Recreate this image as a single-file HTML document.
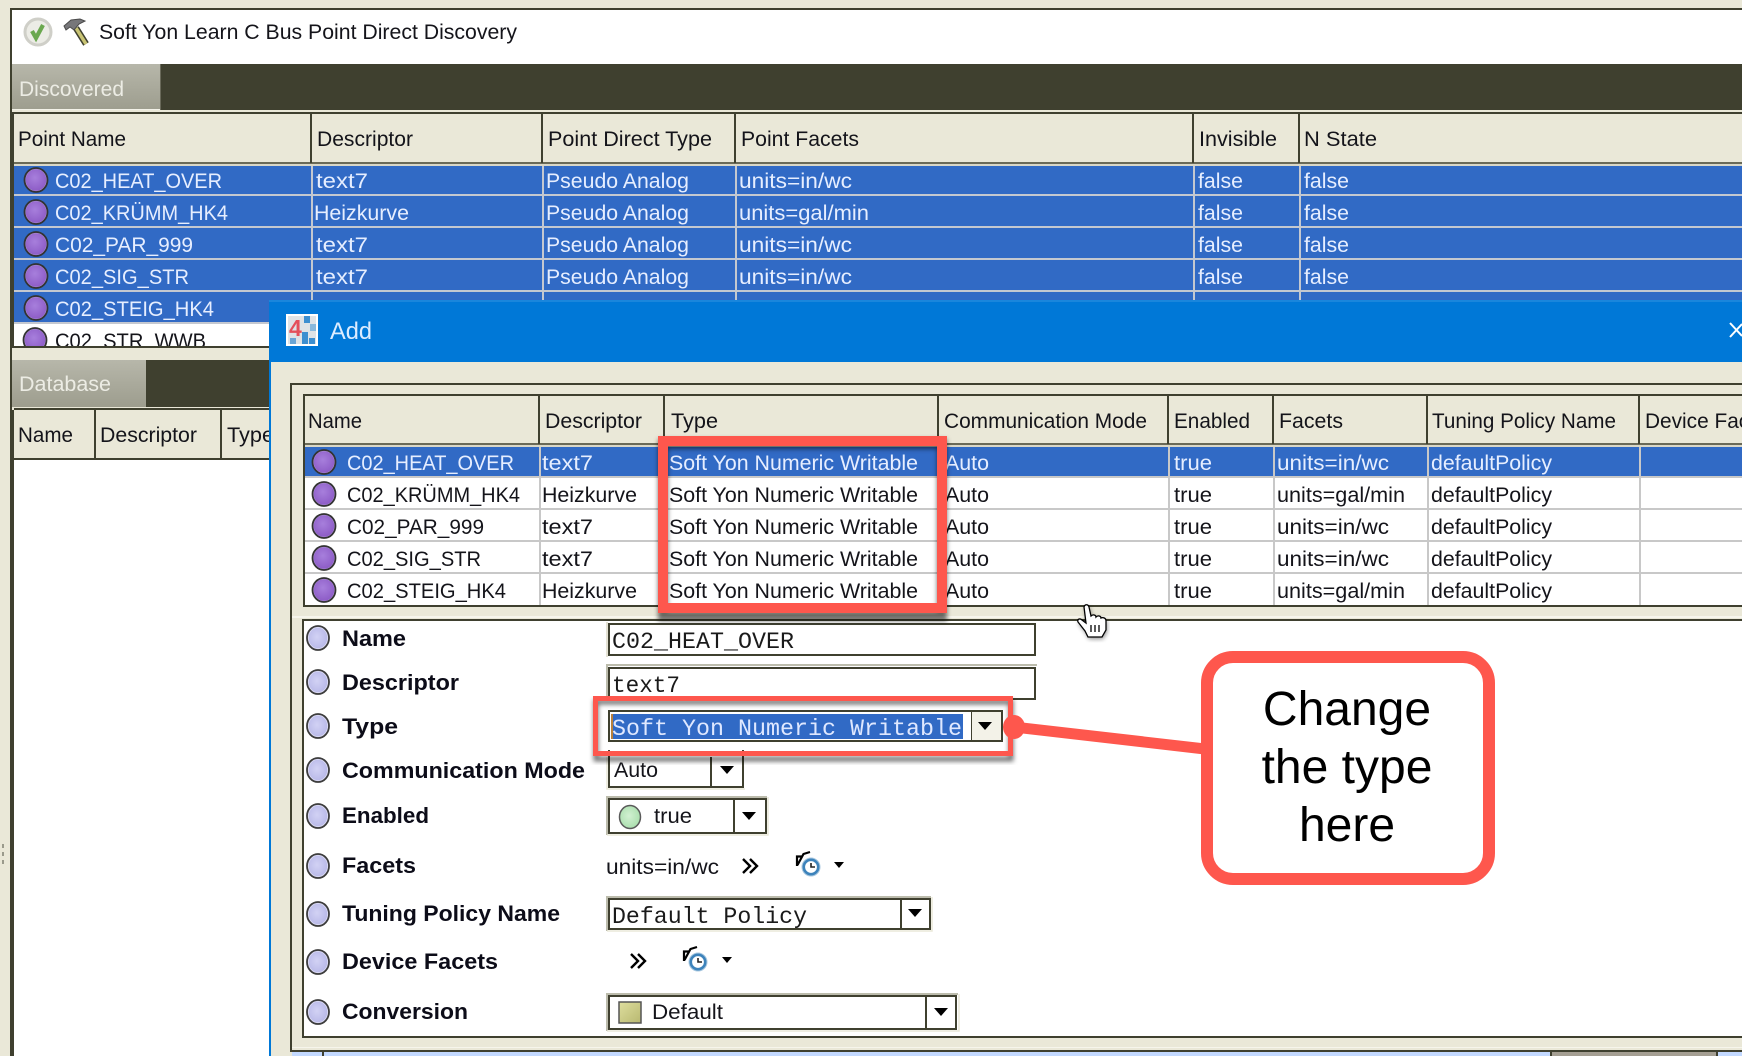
<!DOCTYPE html>
<html>
<head>
<meta charset="utf-8">
<title>Soft Yon Learn C Bus Point Direct Discovery</title>
<style>
html,body{margin:0;padding:0;background:#fff;width:1742px;height:1056px;overflow:hidden}
svg{display:block}
text{font-family:"Liberation Sans",sans-serif;font-size:21px;fill:#14141a}
.w{fill:#e6eeff}
.b{font-weight:bold;font-size:22px;fill:#0c0c18}
.m{font-family:"Liberation Mono",monospace;font-size:23.3px;fill:#1a1a1a}
.c{font-size:48px;fill:#000;text-anchor:middle}
</style>
</head>
<body>
<svg width="1742" height="1056" viewBox="0 0 1742 1056" xmlns="http://www.w3.org/2000/svg">
<defs>
<radialGradient id="pu" cx=".45" cy=".4" r=".65"><stop offset="0" stop-color="#a77fdc"/><stop offset="1" stop-color="#8a58c4"/></radialGradient>
<radialGradient id="la" cx=".45" cy=".45" r=".65"><stop offset="0" stop-color="#d2d2f4"/><stop offset="1" stop-color="#b4b4e6"/></radialGradient>
<radialGradient id="gr" cx=".45" cy=".45" r=".65"><stop offset="0" stop-color="#d2f0d2"/><stop offset="1" stop-color="#a4dca8"/></radialGradient>
<linearGradient id="tab" x1="0" y1="0" x2="0" y2="1"><stop offset="0" stop-color="#b7b7aa"/><stop offset="1" stop-color="#9d9d8e"/></linearGradient>
<linearGradient id="kh" x1="0" y1="0" x2="1" y2="1"><stop offset="0" stop-color="#dede9e"/><stop offset="1" stop-color="#b8b870"/></linearGradient>
<filter id="sh" x="-10%" y="-10%" width="120%" height="120%"><feGaussianBlur stdDeviation="2.5"/></filter>
<g id="pp"><ellipse rx="11" ry="11.5" fill="url(#pu)" stroke="#b8a0dc" stroke-width="1.5"/><ellipse rx="11.500" ry="12" fill="none" stroke="#333" stroke-width="1.8"/></g>
<g id="ll"><ellipse rx="10" ry="11" fill="url(#la)" stroke="#dcdcf4" stroke-width="1.5"/><ellipse rx="11" ry="12" fill="none" stroke="#3c3c3c" stroke-width="1.8"/></g>
<path id="ar" d="M-7-4H7L0 4Z" fill="#000"/>
<g id="ck"><circle r="7.500" fill="#fff" stroke="#3d83bb" stroke-width="3.200"/><circle r="9" fill="none" stroke="#a9c8e0" stroke-width="1"/><path d="M0-4V0H4" fill="none" stroke="#222" stroke-width="1.6"/><path d="M-13.500-2-7.500-13-1-15M-14-1V-10.500H-8.500" fill="none" stroke="#000" stroke-width="2.200"/></g>
<g id="dd" fill="none" stroke="#000" stroke-width="2.400"><path d="M-9-7-2 0-9 7M-2-7 5 0-2 7"/></g>
</defs>

<!-- outer -->
<rect width="1742" height="1056" fill="#eae8d8"/>
<rect x="10" y="8" width="1732" height="1048" fill="#3f402f"/>
<rect x="12" y="10" width="1730" height="54" fill="#fff"/>
<rect x="14" y="110" width="1728" height="950" fill="#fff"/>
<!-- title -->
<circle cx="38" cy="32" r="13" fill="#ecece6" stroke="#cfcfc8" stroke-width="3"/>
<path d="M32 31l4 7 7-13" fill="none" stroke="#6aa84f" stroke-width="4.200"/>
<path d="M76 28 86 44" stroke="#3f402f" stroke-width="6.500"/>
<path d="M76 28 86 44" stroke="#c9c474" stroke-width="3.500"/>
<path d="M64 26 71 20 80 19 85 21 79 24 74 30 70 27 66 30Z" fill="#77777a" stroke="#4a4a4a" stroke-width="1"/>
<text x="99" y="39" textLength="418" lengthAdjust="spacingAndGlyphs">Soft Yon Learn C Bus Point Direct Discovery</text>

<!-- Discovered tab bar -->
<rect x="12" y="64" width="1730" height="46" fill="#3f402f"/>
<rect x="12" y="64" width="148" height="46" fill="url(#tab)"/>
<rect x="12" y="109" width="148" height="2" fill="#f3f2e8"/>
<rect x="160" y="64" width="1" height="46" fill="#6a6a5a"/>
<text x="19" y="96" textLength="105" lengthAdjust="spacingAndGlyphs" style="fill:#ecece4">Discovered</text>
<rect x="12" y="110" width="1730" height="3" fill="#eae8d8"/>
<rect x="12" y="112" width="1730" height="2" fill="#3f402f"/>

<!-- table 1 header -->
<rect x="14" y="114" width="1728" height="52" fill="#eae8d8"/>
<rect x="14" y="162" width="1728" height="2" fill="#6a6a58"/>
<rect x="14" y="164" width="1728" height="2" fill="#d9d7c7"/>
<g fill="#3f402f"><rect x="310" y="114" width="2" height="49"/><rect x="541" y="114" width="2" height="49"/><rect x="734" y="114" width="2" height="49"/><rect x="1192" y="114" width="2" height="49"/><rect x="1298" y="114" width="2" height="49"/></g>
<text x="18" y="146" textLength="108" lengthAdjust="spacingAndGlyphs">Point Name</text>
<text x="317" y="146" textLength="96" lengthAdjust="spacingAndGlyphs">Descriptor</text>
<text x="548" y="146" textLength="164" lengthAdjust="spacingAndGlyphs">Point Direct Type</text>
<text x="741" y="146" textLength="118" lengthAdjust="spacingAndGlyphs">Point Facets</text>
<text x="1199" y="146" textLength="78" lengthAdjust="spacingAndGlyphs">Invisible</text>
<text x="1304" y="146" textLength="73" lengthAdjust="spacingAndGlyphs">N State</text>

<!-- table 1 rows -->
<rect x="14" y="166" width="1728" height="157" fill="#316ac5"/>
<rect x="14" y="324" width="1728" height="22" fill="#fff"/>
<g fill="#c4c8d0"><rect x="14" y="194" width="1728" height="2"/><rect x="14" y="226" width="1728" height="2"/><rect x="14" y="258" width="1728" height="2"/><rect x="14" y="290" width="1728" height="2"/><rect x="14" y="322" width="1728" height="2"/>
<rect x="311" y="166" width="2" height="180"/><rect x="542" y="166" width="2" height="180"/><rect x="735" y="166" width="2" height="180"/><rect x="1193" y="166" width="2" height="180"/><rect x="1299" y="166" width="2" height="180"/></g>
<use href="#pp" x="36" y="180"/><use href="#pp" x="36" y="212"/><use href="#pp" x="36" y="244"/><use href="#pp" x="36" y="276"/><use href="#pp" x="36" y="308"/>
<text class="w" x="55" y="188" textLength="167" lengthAdjust="spacingAndGlyphs">C02_HEAT_OVER</text>
<text class="w" x="55" y="220" textLength="173" lengthAdjust="spacingAndGlyphs">C02_KRÜMM_HK4</text>
<text class="w" x="55" y="252" textLength="138" lengthAdjust="spacingAndGlyphs">C02_PAR_999</text>
<text class="w" x="55" y="284" textLength="134" lengthAdjust="spacingAndGlyphs">C02_SIG_STR</text>
<text class="w" x="55" y="316" textLength="159" lengthAdjust="spacingAndGlyphs">C02_STEIG_HK4</text>
<text class="w" x="316" y="188" textLength="52" lengthAdjust="spacingAndGlyphs">text7</text>
<text class="w" x="314" y="220" textLength="95" lengthAdjust="spacingAndGlyphs">Heizkurve</text>
<text class="w" x="316" y="252" textLength="52" lengthAdjust="spacingAndGlyphs">text7</text>
<text class="w" x="316" y="284" textLength="52" lengthAdjust="spacingAndGlyphs">text7</text>
<text class="w" x="314" y="316" textLength="95" lengthAdjust="spacingAndGlyphs">Heizkurve</text>
<text class="w" x="546" y="188" textLength="143" lengthAdjust="spacingAndGlyphs">Pseudo Analog</text>
<text class="w" x="546" y="220" textLength="143" lengthAdjust="spacingAndGlyphs">Pseudo Analog</text>
<text class="w" x="546" y="252" textLength="143" lengthAdjust="spacingAndGlyphs">Pseudo Analog</text>
<text class="w" x="546" y="284" textLength="143" lengthAdjust="spacingAndGlyphs">Pseudo Analog</text>
<text class="w" x="546" y="316" textLength="143" lengthAdjust="spacingAndGlyphs">Pseudo Analog</text>
<text class="w" x="739" y="188" textLength="113" lengthAdjust="spacingAndGlyphs">units=in/wc</text>
<text class="w" x="739" y="220" textLength="130" lengthAdjust="spacingAndGlyphs">units=gal/min</text>
<text class="w" x="739" y="252" textLength="113" lengthAdjust="spacingAndGlyphs">units=in/wc</text>
<text class="w" x="739" y="284" textLength="113" lengthAdjust="spacingAndGlyphs">units=in/wc</text>
<text class="w" x="739" y="316" textLength="130" lengthAdjust="spacingAndGlyphs">units=gal/min</text>
<text class="w" x="1198" y="188" textLength="45" lengthAdjust="spacingAndGlyphs">false</text>
<text class="w" x="1198" y="220" textLength="45" lengthAdjust="spacingAndGlyphs">false</text>
<text class="w" x="1198" y="252" textLength="45" lengthAdjust="spacingAndGlyphs">false</text>
<text class="w" x="1198" y="284" textLength="45" lengthAdjust="spacingAndGlyphs">false</text>
<text class="w" x="1198" y="316" textLength="45" lengthAdjust="spacingAndGlyphs">false</text>
<text class="w" x="1304" y="188" textLength="45" lengthAdjust="spacingAndGlyphs">false</text>
<text class="w" x="1304" y="220" textLength="45" lengthAdjust="spacingAndGlyphs">false</text>
<text class="w" x="1304" y="252" textLength="45" lengthAdjust="spacingAndGlyphs">false</text>
<text class="w" x="1304" y="284" textLength="45" lengthAdjust="spacingAndGlyphs">false</text>
<text class="w" x="1304" y="316" textLength="45" lengthAdjust="spacingAndGlyphs">false</text>
<use href="#pp" x="35" y="340"/>
<text x="55" y="348" textLength="151" lengthAdjust="spacingAndGlyphs">C02_STR_WWB</text>
<!-- end of list & Database -->
<rect x="12" y="346" width="1730" height="2" fill="#3f402f"/>
<rect x="12" y="348" width="1730" height="12" fill="#eae8d8"/>
<rect x="12" y="360" width="1730" height="48" fill="#3f402f"/>
<rect x="12" y="360" width="134" height="47" fill="url(#tab)"/>
<text x="19" y="391" textLength="92" lengthAdjust="spacingAndGlyphs" style="fill:#ecece4">Database</text>
<rect x="12" y="407" width="258" height="3" fill="#eae8d8"/>
<rect x="14" y="410" width="256" height="48" fill="#eae8d8"/>
<rect x="14" y="408" width="256" height="2" fill="#3f402f"/>
<rect x="14" y="458" width="256" height="2" fill="#3f402f"/>
<rect x="94" y="410" width="2" height="48" fill="#3f402f"/>
<rect x="220" y="410" width="2" height="48" fill="#3f402f"/>
<text x="18" y="442" textLength="55" lengthAdjust="spacingAndGlyphs">Name</text>
<text x="100" y="442" textLength="97" lengthAdjust="spacingAndGlyphs">Descriptor</text>
<text x="227" y="442" textLength="47" lengthAdjust="spacingAndGlyphs">Type</text>
<rect x="14" y="460" width="256" height="600" fill="#fff"/>
<rect x="10" y="460" width="4" height="600" fill="#3f402f"/>
<g fill="#9a9a8c"><rect x="2" y="844" width="2" height="4"/><rect x="2" y="852" width="2" height="4"/><rect x="2" y="860" width="2" height="4"/></g>

<!-- dialog -->
<rect x="269" y="301" width="1473" height="755" fill="#0078d7"/>
<rect x="269" y="300" width="1473" height="2" fill="#1a86dc"/>
<rect x="271" y="362" width="1471" height="694" fill="#eae8d8"/>
<rect x="286" y="314" width="32" height="32" fill="#fff"/>
<rect x="288" y="316" width="28" height="28" fill="#dfe3e6"/>
<text x="289" y="336" style="font-size:23px;font-weight:bold;fill:#e4505a">4</text>
<g fill="#3d8fd0"><rect x="304" y="316" width="6" height="7"/><rect x="310" y="324" width="6" height="7" fill="#8ab9dc"/><rect x="302" y="332" width="6" height="6"/><rect x="290" y="338" width="6" height="6" fill="#6aa5d5"/><rect x="302" y="338" width="6" height="6"/><rect x="309" y="338" width="6" height="6"/></g>
<text x="330" y="339" textLength="42" lengthAdjust="spacingAndGlyphs" style="font-size:24px;fill:#dcecff">Add</text>
<path d="M1730 323 1742 336M1730 337 1742 324" stroke="#fff" stroke-width="2" fill="none"/>

<!-- dialog panels -->
<rect x="290" y="383" width="1452" height="2" fill="#3f402f"/>
<rect x="290" y="383" width="2" height="669" fill="#3f402f"/>
<rect x="303" y="394" width="1439" height="2" fill="#3f402f"/>
<rect x="303" y="394" width="2" height="213" fill="#3f402f"/>
<rect x="305" y="396" width="1437" height="47" fill="#eae8d8"/>
<rect x="305" y="443" width="1437" height="2" fill="#6a6a58"/>
<rect x="305" y="445" width="1437" height="2" fill="#d9d7c7"/>
<g fill="#3f402f"><rect x="538" y="396" width="2" height="48"/><rect x="663" y="396" width="2" height="48"/><rect x="937" y="396" width="2" height="48"/><rect x="1167" y="396" width="2" height="48"/><rect x="1272" y="396" width="2" height="48"/><rect x="1426" y="396" width="2" height="48"/><rect x="1638" y="396" width="2" height="48"/></g>
<text x="308" y="428" textLength="54" lengthAdjust="spacingAndGlyphs">Name</text>
<text x="545" y="428" textLength="97" lengthAdjust="spacingAndGlyphs">Descriptor</text>
<text x="671" y="428" textLength="47" lengthAdjust="spacingAndGlyphs">Type</text>
<text x="944" y="428" textLength="203" lengthAdjust="spacingAndGlyphs">Communication Mode</text>
<text x="1174" y="428" textLength="76" lengthAdjust="spacingAndGlyphs">Enabled</text>
<text x="1279" y="428" textLength="64" lengthAdjust="spacingAndGlyphs">Facets</text>
<text x="1432" y="428" textLength="184" lengthAdjust="spacingAndGlyphs">Tuning Policy Name</text>
<text x="1645" y="428" textLength="132" lengthAdjust="spacingAndGlyphs">Device Facets</text>

<rect x="305" y="447" width="1437" height="29" fill="#316ac5"/>
<rect x="305" y="478" width="1437" height="127" fill="#fff"/>
<g fill="#c8c8c8"><rect x="305" y="476" width="1437" height="2"/><rect x="305" y="508" width="1437" height="2"/><rect x="305" y="540" width="1437" height="2"/><rect x="305" y="572" width="1437" height="2"/>
<rect x="539" y="447" width="2" height="158"/><rect x="664" y="447" width="2" height="158"/><rect x="938" y="447" width="2" height="158"/><rect x="1168" y="447" width="2" height="158"/><rect x="1273" y="447" width="2" height="158"/><rect x="1427" y="447" width="2" height="158"/><rect x="1639" y="447" width="2" height="158"/></g>
<use href="#pp" x="324" y="462"/><use href="#pp" x="324" y="494"/><use href="#pp" x="324" y="526"/><use href="#pp" x="324" y="558"/><use href="#pp" x="324" y="590"/>
<text class="w" x="347" y="470" textLength="167" lengthAdjust="spacingAndGlyphs">C02_HEAT_OVER</text>
<text x="347" y="502" textLength="173" lengthAdjust="spacingAndGlyphs">C02_KRÜMM_HK4</text>
<text x="347" y="534" textLength="137" lengthAdjust="spacingAndGlyphs">C02_PAR_999</text>
<text x="347" y="566" textLength="134" lengthAdjust="spacingAndGlyphs">C02_SIG_STR</text>
<text x="347" y="598" textLength="159" lengthAdjust="spacingAndGlyphs">C02_STEIG_HK4</text>
<text class="w" x="542" y="470" textLength="51" lengthAdjust="spacingAndGlyphs">text7</text>
<text x="542" y="502" textLength="95" lengthAdjust="spacingAndGlyphs">Heizkurve</text>
<text x="542" y="534" textLength="51" lengthAdjust="spacingAndGlyphs">text7</text>
<text x="542" y="566" textLength="51" lengthAdjust="spacingAndGlyphs">text7</text>
<text x="542" y="598" textLength="95" lengthAdjust="spacingAndGlyphs">Heizkurve</text>
<text class="w" x="669" y="470" textLength="249" lengthAdjust="spacingAndGlyphs">Soft Yon Numeric Writable</text>
<text x="669" y="502" textLength="249" lengthAdjust="spacingAndGlyphs">Soft Yon Numeric Writable</text>
<text x="669" y="534" textLength="249" lengthAdjust="spacingAndGlyphs">Soft Yon Numeric Writable</text>
<text x="669" y="566" textLength="249" lengthAdjust="spacingAndGlyphs">Soft Yon Numeric Writable</text>
<text x="669" y="598" textLength="249" lengthAdjust="spacingAndGlyphs">Soft Yon Numeric Writable</text>
<text class="w" x="945" y="470" textLength="44" lengthAdjust="spacingAndGlyphs">Auto</text>
<text x="945" y="502" textLength="44" lengthAdjust="spacingAndGlyphs">Auto</text>
<text x="945" y="534" textLength="44" lengthAdjust="spacingAndGlyphs">Auto</text>
<text x="945" y="566" textLength="44" lengthAdjust="spacingAndGlyphs">Auto</text>
<text x="945" y="598" textLength="44" lengthAdjust="spacingAndGlyphs">Auto</text>
<text class="w" x="1174" y="470" textLength="38" lengthAdjust="spacingAndGlyphs">true</text>
<text x="1174" y="502" textLength="38" lengthAdjust="spacingAndGlyphs">true</text>
<text x="1174" y="534" textLength="38" lengthAdjust="spacingAndGlyphs">true</text>
<text x="1174" y="566" textLength="38" lengthAdjust="spacingAndGlyphs">true</text>
<text x="1174" y="598" textLength="38" lengthAdjust="spacingAndGlyphs">true</text>
<text class="w" x="1277" y="470" textLength="112" lengthAdjust="spacingAndGlyphs">units=in/wc</text>
<text x="1277" y="502" textLength="128" lengthAdjust="spacingAndGlyphs">units=gal/min</text>
<text x="1277" y="534" textLength="112" lengthAdjust="spacingAndGlyphs">units=in/wc</text>
<text x="1277" y="566" textLength="112" lengthAdjust="spacingAndGlyphs">units=in/wc</text>
<text x="1277" y="598" textLength="128" lengthAdjust="spacingAndGlyphs">units=gal/min</text>
<text class="w" x="1431" y="470" textLength="121" lengthAdjust="spacingAndGlyphs">defaultPolicy</text>
<text x="1431" y="502" textLength="121" lengthAdjust="spacingAndGlyphs">defaultPolicy</text>
<text x="1431" y="534" textLength="121" lengthAdjust="spacingAndGlyphs">defaultPolicy</text>
<text x="1431" y="566" textLength="121" lengthAdjust="spacingAndGlyphs">defaultPolicy</text>
<text x="1431" y="598" textLength="121" lengthAdjust="spacingAndGlyphs">defaultPolicy</text>
<rect x="305" y="605" width="1437" height="2" fill="#3f402f"/>
<rect x="292" y="616" width="1450" height="2" fill="#f6f5ec"/>

<!-- form panel -->
<rect x="302" y="619" width="1440" height="2" fill="#3f402f"/>
<rect x="302" y="619" width="2" height="419" fill="#3f402f"/>
<rect x="304" y="621" width="1438" height="415" fill="#fff"/>
<rect x="302" y="1036" width="1440" height="2" fill="#3f402f"/>
<rect x="292" y="1047" width="1450" height="1" fill="#f6f5ec"/>
<rect x="290" y="1050" width="1452" height="2" fill="#3f402f"/>
<rect x="292" y="1052" width="30" height="4" fill="#c3d9ff"/>
<rect x="322" y="1052" width="2" height="4" fill="#3f402f"/>
<rect x="324" y="1052" width="1226" height="4" fill="#c3d9ff"/>
<rect x="1550" y="1052" width="2" height="4" fill="#3f402f"/>
<rect x="1552" y="1052" width="164" height="4" fill="#a59f93"/>
<rect x="1716" y="1052" width="2" height="4" fill="#3f402f"/>
<rect x="1718" y="1052" width="24" height="4" fill="#c3d9ff"/>

<use href="#ll" x="318" y="638"/><use href="#ll" x="318" y="682"/><use href="#ll" x="318" y="726"/><use href="#ll" x="318" y="770"/><use href="#ll" x="318" y="816"/><use href="#ll" x="318" y="866"/><use href="#ll" x="318" y="914"/><use href="#ll" x="318" y="962"/><use href="#ll" x="318" y="1012"/>
<text class="b" x="342" y="646" textLength="64" lengthAdjust="spacingAndGlyphs">Name</text>
<text class="b" x="342" y="690" textLength="117" lengthAdjust="spacingAndGlyphs">Descriptor</text>
<text class="b" x="342" y="734" textLength="56" lengthAdjust="spacingAndGlyphs">Type</text>
<text class="b" x="342" y="778" textLength="243" lengthAdjust="spacingAndGlyphs">Communication Mode</text>
<text class="b" x="342" y="823" textLength="87" lengthAdjust="spacingAndGlyphs">Enabled</text>
<text class="b" x="342" y="873" textLength="74" lengthAdjust="spacingAndGlyphs">Facets</text>
<text class="b" x="342" y="921" textLength="218" lengthAdjust="spacingAndGlyphs">Tuning Policy Name</text>
<text class="b" x="342" y="969" textLength="156" lengthAdjust="spacingAndGlyphs">Device Facets</text>
<text class="b" x="342" y="1019" textLength="126" lengthAdjust="spacingAndGlyphs">Conversion</text>

<!-- fields -->
<g fill="none" stroke="#3f402f" stroke-width="2">
<rect x="609" y="624" width="426" height="31"/>
<rect x="609" y="668" width="426" height="31"/>
</g>
<path d="M607 664V701M607 665H1037" stroke="#bcbcac" stroke-width="2" fill="none"/>
<path d="M607 622V657" stroke="#e4e2d4" stroke-width="2" fill="none"/>
<text class="m" x="612" y="648" textLength="182" lengthAdjust="spacingAndGlyphs">C02_HEAT_OVER</text>
<text class="m" x="612" y="692" textLength="68" lengthAdjust="spacingAndGlyphs">text7</text>

<!-- type combo -->
<rect x="609" y="711" width="393" height="30" fill="#fff" stroke="#3f402f" stroke-width="2"/>
<rect x="612" y="714" width="351" height="25" fill="#316ac5"/>
<rect x="611" y="714" width="2" height="25" fill="#b8803c"/>
<text class="m" x="612" y="735" textLength="350" lengthAdjust="spacingAndGlyphs" style="fill:#dfe8ff">Soft Yon Numeric Writable</text>
<rect x="971" y="712" width="1" height="28" fill="#3f402f"/>
<rect x="972" y="712" width="29" height="28" fill="#f3f2e8"/>
<use href="#ar" x="985" y="726"/>

<!-- comm combo -->
<path d="M609 750V787H743V750" fill="#fff" stroke="#3f402f" stroke-width="2"/>
<rect x="710" y="757" width="2" height="30" fill="#3f402f"/>
<use href="#ar" x="727" y="770"/>
<path d="M607 757V789H745" stroke="#eae8d8" stroke-width="1.500" fill="none"/>
<text x="614" y="777" textLength="44" lengthAdjust="spacingAndGlyphs">Auto</text>

<!-- enabled combo -->
<path d="M607 835V797H767" stroke="#bcbcac" stroke-width="2" fill="none"/>
<path d="M607 835H768V797" stroke="#eae8d8" stroke-width="1.500" fill="none"/>
<rect x="609" y="799" width="157" height="34" fill="#fff" stroke="#3f402f" stroke-width="2"/>
<rect x="733" y="800" width="2" height="32" fill="#3f402f"/>
<ellipse cx="630" cy="817" rx="10.500" ry="11.500" fill="url(#gr)" stroke="#5a5a5a" stroke-width="1.500"/>
<text x="654" y="823" textLength="38" lengthAdjust="spacingAndGlyphs">true</text>
<use href="#ar" x="749" y="816"/>

<!-- facets -->
<text x="606" y="874" textLength="113" lengthAdjust="spacingAndGlyphs">units=in/wc</text>
<use href="#dd" x="752" y="866"/>
<use href="#ck" x="811" y="867"/>
<path d="M834 862H844L839 868Z" fill="#000"/>

<!-- tuning combo -->
<path d="M607 931V897H931" stroke="#bcbcac" stroke-width="2" fill="none"/>
<path d="M607 931H932V897" stroke="#eae8d8" stroke-width="1.500" fill="none"/>
<rect x="609" y="899" width="321" height="30" fill="#fff" stroke="#3f402f" stroke-width="2"/>
<rect x="900" y="900" width="2" height="28" fill="#3f402f"/>
<text class="m" x="612" y="923" textLength="195" lengthAdjust="spacingAndGlyphs">Default Policy</text>
<use href="#ar" x="915" y="913"/>

<!-- device facets -->
<use href="#dd" x="640" y="961"/>
<use href="#ck" x="698" y="962"/>
<path d="M722 957H732L727 963Z" fill="#000"/>

<!-- conversion combo -->
<path d="M607 1031V994H958" stroke="#bcbcac" stroke-width="2" fill="none"/>
<path d="M607 1031H959V994" stroke="#eae8d8" stroke-width="1.500" fill="none"/>
<rect x="609" y="996" width="347" height="33" fill="#fff" stroke="#3f402f" stroke-width="2"/>
<rect x="925" y="997" width="2" height="31" fill="#3f402f"/>
<rect x="619" y="1002" width="22" height="21" fill="url(#kh)" stroke="#555" stroke-width="1.500"/>
<text x="652" y="1019" textLength="71" lengthAdjust="spacingAndGlyphs">Default</text>
<use href="#ar" x="941" y="1012"/>

<!-- red highlight 1 -->
<rect x="663" y="441" width="279" height="172" fill="none" stroke="#000" stroke-opacity=".55" stroke-width="10" filter="url(#sh)" transform="translate(0 3)"/>
<rect x="663" y="441" width="279" height="167" fill="none" stroke="#fe574d" stroke-width="10"/>

<!-- red highlight 2 -->
<rect x="596" y="699" width="415" height="57" fill="none" stroke="#000" stroke-opacity=".55" stroke-width="5" filter="url(#sh)" transform="translate(0 3)"/>
<rect x="595.500" y="698.500" width="415" height="55" fill="none" stroke="#fe574d" stroke-width="5"/>

<!-- pointer -->
<line x1="1014" y1="727" x2="1205" y2="749" stroke="#fe574d" stroke-width="11"/>
<ellipse cx="1014" cy="727" rx="11" ry="12" fill="#fe574d"/>

<!-- callout -->
<rect x="1207" y="657" width="282" height="222" rx="26" ry="26" fill="#fff" stroke="#fe574d" stroke-width="12"/>
<text class="c" x="1347" y="725">Change</text>
<text class="c" x="1347" y="783">the type</text>
<text class="c" x="1347" y="841">here</text>

<!-- hand cursor -->
<path d="M1084 607C1085 604 1088 604 1089 607L1091 616C1093 614 1096 615 1096 617C1098 615 1101 616 1101 618C1103 617 1106 618 1106 621V630L1102 637H1088L1085 631 1078 622C1077 619 1080 618 1082 620L1086 623Z" fill="#000" opacity=".45" filter="url(#sh)" transform="translate(1 2)"/>
<path d="M1084 607C1085 604 1088 604 1089 607L1091 616C1093 614 1096 615 1096 617C1098 615 1101 616 1101 618C1103 617 1106 618 1106 621V630L1102 637H1088L1085 631 1078 622C1077 619 1080 618 1082 620L1086 623Z" fill="#fff" stroke="#000" stroke-width="1.300"/>
<path d="M1091 625V632M1095 625V632M1099 625V632" stroke="#000" stroke-width="1.300"/>
</svg>
</body>
</html>
